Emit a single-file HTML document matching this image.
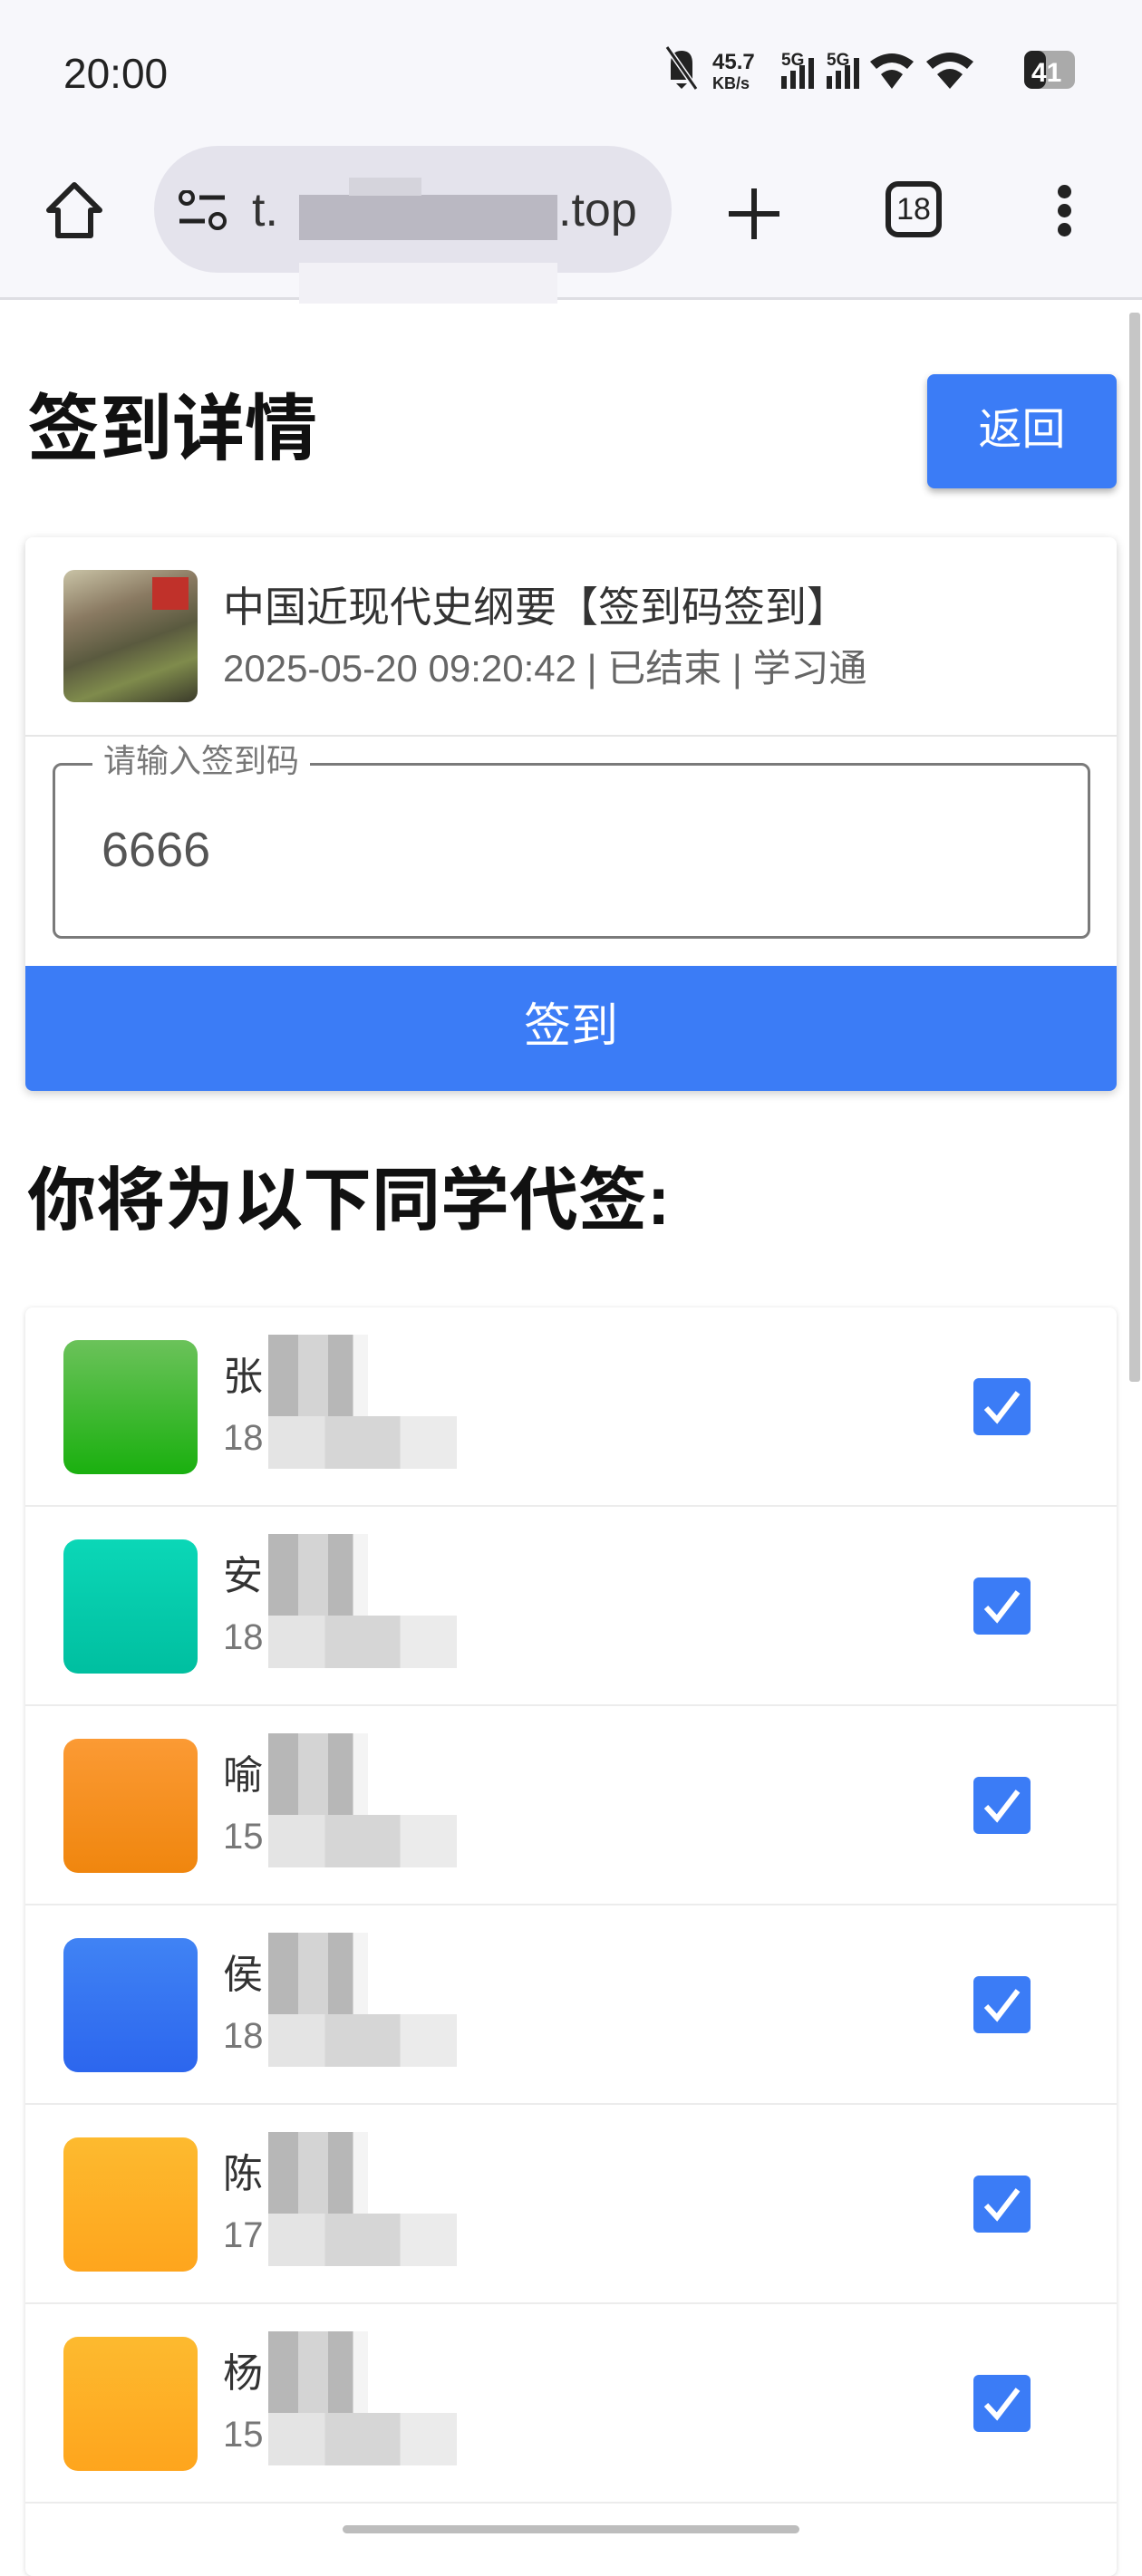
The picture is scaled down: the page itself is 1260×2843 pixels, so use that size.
<!DOCTYPE html>
<html><head><meta charset="utf-8"><style>
*{margin:0;padding:0;box-sizing:border-box}
body{width:1260px;height:2800px;overflow:hidden;background:#fff;position:relative;font-family:"Liberation Sans","Noto Sans CJK SC",sans-serif;color:#222}
.a{position:absolute}
.top{left:0;top:0;width:1260px;height:331px;background:#f7f7fb;border-bottom:3px solid #dedee3}
.t{white-space:nowrap;line-height:1}
.row{position:absolute;left:28px;width:1204px;height:220px;border-bottom:2px solid #ececec}
.av{position:absolute;left:42px;top:36px;width:148px;height:148px;border-radius:16px}
.nm{position:absolute;left:218px;top:55px;font-size:44px;color:#333;line-height:1}
.ph{position:absolute;left:218px;top:124px;font-size:40px;color:#777;line-height:1}
.px{position:absolute;left:268px;top:30px;width:110px;height:96px;background:linear-gradient(90deg,#aaa 0 30%,#ccc 30% 60%,#aaa 60% 85%,#f2f2f2 85%);opacity:.85}
.px2{position:absolute;left:268px;top:120px;width:208px;height:58px;background:linear-gradient(90deg,#e4e4e4 0 30%,#d6d6d6 30% 70%,#ebebeb 70%)}
.cb{position:absolute;left:1046px;top:78px;width:63px;height:63px;background:#3b7cf6;border-radius:6px}
</style></head><body>
<div class="a top"></div>
<div class="a t" style="left:70px;top:58px;font-size:46px;color:#222">20:00</div>
<svg class="a" style="left:734px;top:50px" width="460" height="54" viewBox="0 0 460 54">
<path d="M6 38 L6 20 Q6 6 18 6 Q30 6 30 20 L30 38 Z M12 42 L24 42 L18 48Z" fill="#222"/><line x1="2" y1="2" x2="34" y2="48" stroke="#f7f7fb" stroke-width="6"/><line x1="2" y1="2" x2="34" y2="48" stroke="#222" stroke-width="3"/>
<text x="52" y="26" font-size="24" font-weight="bold" fill="#222" font-family="Liberation Sans">45.7</text>
<text x="52" y="48" font-size="18" font-weight="bold" fill="#222" font-family="Liberation Sans">KB/s</text>
<text x="128" y="22" font-size="19" font-weight="bold" fill="#222" font-family="Liberation Sans">5G</text>
<rect x="128" y="34" width="6" height="14" fill="#222"/><rect x="138" y="28" width="6" height="20" fill="#222"/><rect x="148" y="22" width="6" height="26" fill="#222"/><rect x="158" y="14" width="6" height="34" fill="#222"/>
<text x="178" y="22" font-size="19" font-weight="bold" fill="#222" font-family="Liberation Sans">5G</text>
<rect x="178" y="34" width="6" height="14" fill="#222"/><rect x="188" y="28" width="6" height="20" fill="#222"/><rect x="198" y="22" width="6" height="26" fill="#222"/><rect x="208" y="14" width="6" height="34" fill="#222"/>
<path d="M226 18 Q250 0 274 18 L267 26 Q250 12 233 26Z M238 32 Q250 22 262 32 L250 48Z" fill="#222"/>
<path d="M288 18 Q314 -2 340 18 L333 26 Q314 10 295 26Z M300 32 Q314 20 328 32 L314 48Z" fill="#222"/>
<rect x="396" y="6" width="56" height="42" rx="9" fill="#aaa"/><rect x="396" y="6" width="24" height="42" rx="9" fill="#222"/>
<text x="404" y="40" font-size="30" font-weight="bold" fill="#fff" font-family="Liberation Sans">41</text>
</svg>
<svg class="a" style="left:50px;top:198px" width="68" height="68" viewBox="0 0 68 68"><path d="M32 6 L60 34 L50 34 L50 62 L14 62 L14 34 L4 34 Z" fill="none" stroke="#222" stroke-width="6" stroke-linejoin="round"/></svg>
<div class="a" style="left:170px;top:161px;width:571px;height:140px;border-radius:70px;background:#e4e3ec"></div>
<svg class="a" style="left:196px;top:210px" width="56" height="46" viewBox="0 0 56 46"><circle cx="10" cy="8" r="7" fill="none" stroke="#222" stroke-width="4"/><line x1="24" y1="8" x2="52" y2="8" stroke="#222" stroke-width="5"/><line x1="2" y1="34" x2="30" y2="34" stroke="#222" stroke-width="5"/><circle cx="44" cy="34" r="8" fill="none" stroke="#222" stroke-width="4"/></svg>
<div class="a t" style="left:278px;top:206px;font-size:52px;color:#333">t.</div>
<div class="a" style="left:330px;top:215px;width:285px;height:50px;background:#bab8c2"></div>
<div class="a" style="left:385px;top:196px;width:80px;height:20px;background:#d5d4dc"></div>
<div class="a" style="left:330px;top:290px;width:285px;height:45px;background:#f2f1f6"></div>
<div class="a t" style="left:616px;top:206px;font-size:52px;color:#333">.top</div>
<svg class="a" style="left:802px;top:204px" width="60" height="64" viewBox="0 0 60 64"><line x1="30" y1="4" x2="30" y2="60" stroke="#222" stroke-width="6"/><line x1="2" y1="32" x2="58" y2="32" stroke="#222" stroke-width="6"/></svg>
<div class="a" style="left:977px;top:200px;width:62px;height:62px;border:6px solid #222;border-radius:14px"></div>
<div class="a t" style="left:977px;top:214px;width:62px;text-align:center;font-size:34px;color:#222">18</div>
<div class="a" style="left:1167px;top:204px;width:15px;height:15px;border-radius:50%;background:#222"></div>
<div class="a" style="left:1167px;top:225px;width:15px;height:15px;border-radius:50%;background:#222"></div>
<div class="a" style="left:1167px;top:246px;width:15px;height:15px;border-radius:50%;background:#222"></div>
<div class="a" style="left:1246px;top:345px;width:12px;height:1180px;background:#c6c6c6;border-radius:3px"></div>
<div class="a t" style="left:30px;top:434px;font-size:80px;font-weight:bold;color:#111">签到详情</div>
<div class="a" style="left:1023px;top:413px;width:209px;height:126px;background:#3b7cf6;border-radius:8px;box-shadow:0 4px 8px rgba(0,0,0,.3)"></div>
<div class="a t" style="left:1023px;top:451px;width:209px;text-align:center;font-size:48px;color:#fff">返回</div>
<div class="a" style="left:28px;top:593px;width:1204px;height:611px;background:#fff;border-radius:8px;box-shadow:0 3px 10px rgba(0,0,0,.2);overflow:hidden">
  <div class="a" style="left:42px;top:36px;width:148px;height:146px;border-radius:12px;background:linear-gradient(160deg,#c9c3a6 0%,#8a7a62 30%,#5a5a3f 55%,#7f8b4c 75%,#3a3a2a 100%)"></div>
  <div class="a" style="left:140px;top:44px;width:40px;height:36px;background:#c0312a"></div>
  <div class="a t" style="left:218px;top:54px;font-size:46px;color:#333">中国近现代史纲要【签到码签到】</div>
  <div class="a t" style="left:218px;top:124px;font-size:42px;color:#666">2025-05-20 09:20:42 | 已结束 | 学习通</div>
  <div class="a" style="left:0;top:218px;width:1204px;height:2px;background:#e6e6e6"></div>
  <div class="a" style="left:30px;top:249px;width:1145px;height:194px;border:3px solid #7a7a7a;border-radius:10px"></div>
  <div class="a t" style="left:74px;top:229px;padding:0 12px;background:#fff;font-size:36px;color:#777">请输入签到码</div>
  <div class="a t" style="left:84px;top:318px;font-size:54px;color:#555">6666</div>
  <div class="a" style="left:0;top:473px;width:1204px;height:138px;background:#3b7cf6"></div>
  <div class="a t" style="left:0;top:514px;width:1204px;text-align:center;font-size:52px;color:#fff">签到</div>
</div>
<div class="a t" style="left:30px;top:1288px;font-size:76px;font-weight:bold;color:#111">你将为以下同学代签:</div>
<div class="a" style="left:28px;top:1443px;width:1204px;height:1400px;background:#fff;border-radius:8px;box-shadow:0 1px 6px rgba(0,0,0,.15)"></div>
<div class="row" style="top:1443px"><div class="av" style="background:linear-gradient(#6bc25a,#1ab00f)"></div><div class="nm">张</div><div class="ph">18</div><div class="px"></div><div class="px2"></div><div class="cb"><svg width="63" height="63"><path d="M14 33 L26 46 L49 16" fill="none" stroke="#fff" stroke-width="6"/></svg></div></div>
<div class="row" style="top:1663px"><div class="av" style="background:linear-gradient(#0bd7b7,#00bfa0)"></div><div class="nm">安</div><div class="ph">18</div><div class="px"></div><div class="px2"></div><div class="cb"><svg width="63" height="63"><path d="M14 33 L26 46 L49 16" fill="none" stroke="#fff" stroke-width="6"/></svg></div></div>
<div class="row" style="top:1883px"><div class="av" style="background:linear-gradient(#fb9a34,#f0860e)"></div><div class="nm">喻</div><div class="ph">15</div><div class="px"></div><div class="px2"></div><div class="cb"><svg width="63" height="63"><path d="M14 33 L26 46 L49 16" fill="none" stroke="#fff" stroke-width="6"/></svg></div></div>
<div class="row" style="top:2103px"><div class="av" style="background:linear-gradient(#4083f4,#2c66ee)"></div><div class="nm">侯</div><div class="ph">18</div><div class="px"></div><div class="px2"></div><div class="cb"><svg width="63" height="63"><path d="M14 33 L26 46 L49 16" fill="none" stroke="#fff" stroke-width="6"/></svg></div></div>
<div class="row" style="top:2323px"><div class="av" style="background:linear-gradient(#fdba2f,#fea51d)"></div><div class="nm">陈</div><div class="ph">17</div><div class="px"></div><div class="px2"></div><div class="cb"><svg width="63" height="63"><path d="M14 33 L26 46 L49 16" fill="none" stroke="#fff" stroke-width="6"/></svg></div></div>
<div class="row" style="top:2543px"><div class="av" style="background:linear-gradient(#fdba2f,#fea51d)"></div><div class="nm">杨</div><div class="ph">15</div><div class="px"></div><div class="px2"></div><div class="cb"><svg width="63" height="63"><path d="M14 33 L26 46 L49 16" fill="none" stroke="#fff" stroke-width="6"/></svg></div></div>
<div class="a" style="left:378px;top:2787px;width:504px;height:9px;border-radius:5px;background:#bdbdbd"></div>
</body></html>
